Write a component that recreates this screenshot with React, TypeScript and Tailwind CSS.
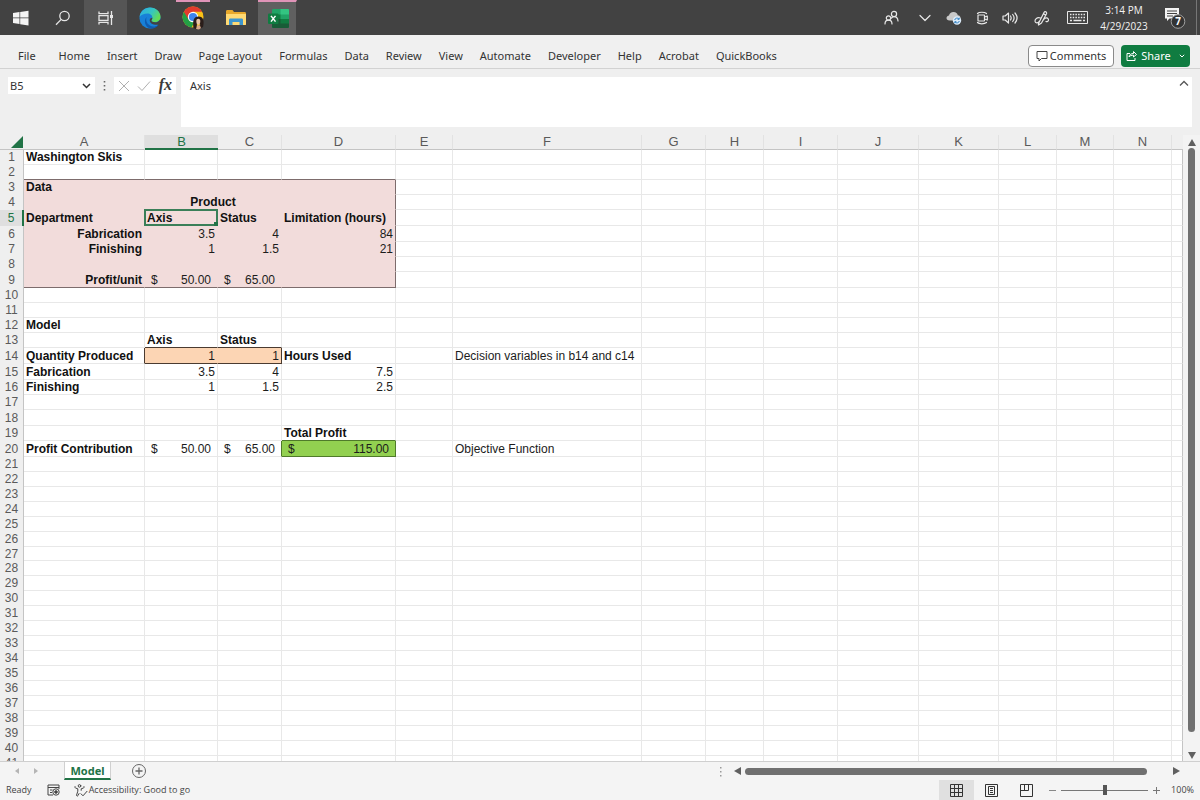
import React from "react";

type Kind = "text" | "right" | "money" | "center";
type Cell = { v: string; kind?: Kind; bold?: boolean; span?: number };

const columns = [
  { id: "A", w: "w-[121px]" },
  { id: "B", w: "w-[73px]" },
  { id: "C", w: "w-[64px]" },
  { id: "D", w: "w-[114px]" },
  { id: "E", w: "w-[57px]" },
  { id: "F", w: "w-[189px]" },
  { id: "G", w: "w-[64px]" },
  { id: "H", w: "w-[58px]" },
  { id: "I", w: "w-[74px]" },
  { id: "J", w: "w-[81px]" },
  { id: "K", w: "w-[80px]" },
  { id: "L", w: "w-[58px]" },
  { id: "M", w: "w-[57px]" },
  { id: "N", w: "w-[58px]" },
];

const cells: Record<string, Cell> = {
  A1: { v: "Washington Skis", bold: true },
  A3: { v: "Data", bold: true },
  B4: { v: "Product", bold: true, kind: "center", span: 2 },
  A5: { v: "Department", bold: true },
  B5: { v: "Axis", bold: true },
  C5: { v: "Status", bold: true },
  D5: { v: "Limitation (hours)", bold: true },
  A6: { v: "Fabrication", bold: true, kind: "right" },
  B6: { v: "3.5", kind: "right" },
  C6: { v: "4", kind: "right" },
  D6: { v: "84", kind: "right" },
  A7: { v: "Finishing", bold: true, kind: "right" },
  B7: { v: "1", kind: "right" },
  C7: { v: "1.5", kind: "right" },
  D7: { v: "21", kind: "right" },
  A9: { v: "Profit/unit", bold: true, kind: "right" },
  B9: { v: "50.00", kind: "money" },
  C9: { v: "65.00", kind: "money" },
  A12: { v: "Model", bold: true },
  B13: { v: "Axis", bold: true },
  C13: { v: "Status", bold: true },
  A14: { v: "Quantity Produced", bold: true },
  B14: { v: "1", kind: "right" },
  C14: { v: "1", kind: "right" },
  D14: { v: "Hours Used", bold: true },
  F14: { v: "Decision variables in b14 and c14" },
  A15: { v: "Fabrication", bold: true },
  B15: { v: "3.5", kind: "right" },
  C15: { v: "4", kind: "right" },
  D15: { v: "7.5", kind: "right" },
  A16: { v: "Finishing", bold: true },
  B16: { v: "1", kind: "right" },
  C16: { v: "1.5", kind: "right" },
  D16: { v: "2.5", kind: "right" },
  D19: { v: "Total Profit", bold: true },
  A20: { v: "Profit Contribution", bold: true },
  B20: { v: "50.00", kind: "money" },
  C20: { v: "65.00", kind: "money" },
  D20: { v: "115.00", kind: "money" },
  F20: { v: "Objective Function" },
};

const tallRows = [5, 6, 9, 14, 15, 18, 20];

function rowHeight(row: number) {
  if (tallRows.includes(row)) return "h-[16px]";
  return row === 27 ? "h-[14px]" : "h-[15px]";
}

function cellStyle(col: string, row: number) {
  const inAD = "ABCD".includes(col);
  if (inAD && row >= 3 && row <= 9) {
    const right = col === "D" ? "border-r-[#7d6c6c]" : "border-r-[#f2dcdb]";
    const bottom = row === 9 ? "border-b-[#7d6c6c]" : "border-b-[#f2dcdb]";
    return `bg-[#f2dcdb] ${right} ${bottom}`;
  }
  if (inAD && row === 2) return "border-r-[#e8e8e8] border-b-[#7d6c6c]";
  if (row === 14 && (col === "B" || col === "C"))
    return `bg-[#fcd5b4] border-b-[#4a3b30] ${col === "C" ? "border-r-[#4a3b30]" : "border-r-[#fcd5b4]"}`;
  if (row === 13 && (col === "B" || col === "C")) return "border-r-[#e8e8e8] border-b-[#4a3b30]";
  if (row === 14 && col === "A") return "border-r-[#4a3b30] border-b-[#e8e8e8]";
  if (row === 20 && col === "D") return "bg-[#92d050] border-[#4f7a2a]";
  if (row === 19 && col === "D") return "border-r-[#e8e8e8] border-b-[#4f7a2a]";
  if (row === 20 && col === "C") return "border-r-[#4f7a2a] border-b-[#e8e8e8]";
  return "border-r-[#e8e8e8] border-b-[#e8e8e8]";
}

function CellText({ cell }: { cell?: Cell }) {
  if (!cell) return null;
  if (cell.kind === "money")
    return (
      <div className="flex justify-between px-[6px]">
        <span>$</span>
        <span>{cell.v}</span>
      </div>
    );
  return <>{cell.v}</>;
}

function Grid() {
  const rows = Array.from({ length: 41 }, (_, i) => i + 1);
  return (
    <table className="w-full table-fixed border-separate border-spacing-0 bg-white text-[12px] leading-[14px] text-[#1c1c1c]">
      <colgroup>
        <col className="w-[24px]" />
        {columns.map((c) => (
          <col key={c.id} className={c.w} />
        ))}
        <col />
      </colgroup>
      <thead>
        <tr className="h-[15px] bg-[#efefef] text-[13px] text-[#5a5a5a]">
          <th className="border-b border-[#c4c4c4] p-0" aria-label="Select all">
            <svg className="ml-auto mr-[1px] h-[12px] w-[12px]" viewBox="0 0 12 12">
              <path d="M12 0v12H0z" fill="#217346" />
            </svg>
          </th>
          {columns.map((c) => (
            <th
              key={c.id}
              scope="col"
              className={
                c.id === "B"
                  ? "border-b-2 border-[#217346] bg-[#dfdfdf] p-0 font-normal leading-[13px] text-[#217346]"
                  : "border-b border-r border-b-[#c4c4c4] border-r-[#e2e2e2] p-0 font-normal"
              }
            >
              {c.id}
            </th>
          ))}
          <th className="border-b border-[#c4c4c4] p-0" />
        </tr>
      </thead>
      <tbody>
        {rows.map((r) => (
          <tr key={r} className={rowHeight(r)}>
            <th
              scope="row"
              className={`border-r p-0 text-center text-[12px] font-normal leading-[13px] ${
                r === 5
                  ? "border-r-2 border-[#217346] bg-[#dfdfdf] text-[#217346]"
                  : "border-[#c4c4c4] bg-[#efefef] text-[#5a5a5a]"
              }`}
            >
              {r}
            </th>
            {columns.map((c) => {
              if (c.id === "C" && r === 4) return null;
              const cell = cells[c.id + r];
              const align =
                cell?.kind === "right" ? "pr-[2px] text-right" : cell?.kind === "center" ? "text-center" : cell?.kind === "money" ? "" : "pl-[2px]";
              return (
                <td
                  key={c.id}
                  colSpan={cell?.span}
                  className={`whitespace-nowrap border-b border-r p-0 align-bottom leading-[13px] ${align} ${cell?.bold ? "font-bold text-[#111]" : ""} ${cellStyle(c.id, r)} ${
                    c.id + r === "B5" ? "relative" : ""
                  }`}
                >
                  <CellText cell={cell} />
                  {c.id + r === "B5" && (
                    <span className="pointer-events-none absolute -inset-px border-2 border-[#3a7f58]">
                      <span className="absolute -bottom-[2px] -right-[2px] h-[4px] w-[4px] bg-[#217346]" />
                    </span>
                  )}
                </td>
              );
            })}
            <td className="border-b border-r border-b-[#e8e8e8] border-r-[#c4c4c4] p-0" />
          </tr>
        ))}
      </tbody>
    </table>
  );
}

function TaskButton({ label, className = "w-[42px]", children }: { label: string; className?: string; children: React.ReactNode }) {
  return (
    <button aria-label={label} className={`flex h-full items-center justify-center ${className}`}>
      {children}
    </button>
  );
}

function TrayButton({ label, className = "w-[28px]", children }: { label: string; className?: string; children: React.ReactNode }) {
  return (
    <button aria-label={label} className={`flex h-full items-center justify-center text-[#e8e8e8] ${className}`}>
      {children}
    </button>
  );
}

const line = { fill: "none", stroke: "currentColor", strokeWidth: 1.2, strokeLinecap: "round", strokeLinejoin: "round" } as const;

function Taskbar() {
  return (
    <header className="flex h-[35px] shrink-0 items-center justify-between bg-[#424242]">
      <div className="flex h-full items-center">
        <TaskButton label="Start">
          <svg width="16" height="16" viewBox="0 0 16 16" fill="#f4f4f4">
            <path d="M0 3l6.500-1v5.600H0zM7.200 1.900L15.500.7v6.900H7.200zM0 8.300h6.500v5.700L0 13.100zM7.200 8.300h8.300v7.100l-8.300-1.200z" />
          </svg>
        </TaskButton>
        <TaskButton label="Search">
          <svg width="16" height="16" viewBox="0 0 16 16" fill="none" stroke="#e6e6e6" strokeWidth="1.300">
            <circle cx="9.500" cy="6" r="4.700" />
            <path d="M6.200 9.400L1 14.800" />
          </svg>
        </TaskButton>
        <TaskButton label="Task View" className="w-[43px] bg-[#555]">
          <svg width="16" height="16" viewBox="0 0 16 16" fill="none" stroke="#e6e6e6" strokeWidth="1.300">
            <path d="M1 1.500v2.200h9V1.500M1 14.500v-2.200h9v2.200M1 5.700h9v4.600H1zM13.500 1v14" />
            <path d="M12 5h3v3h-3z" fill="#e6e6e6" stroke="none" />
          </svg>
        </TaskButton>
        <TaskButton label="Microsoft Edge" className="mr-[3px] w-[46px]">
          <svg width="22" height="22" viewBox="0 0 24 24">
            <defs>
              <linearGradient id="edgeTop" x1="0" y1="0" x2="1" y2="0.500">
                <stop offset="0" stopColor="#2aa8e8" />
                <stop offset="0.600" stopColor="#36c6c0" />
                <stop offset="1" stopColor="#63dc55" />
              </linearGradient>
            </defs>
            <circle cx="12" cy="12" r="11.500" fill="#1880d8" />
            <path d="M.6 11C1.200 4.800 6 .5 12 .5c7 0 11.500 5 11.500 10.200 0 3.800-2.900 5.900-6 5.900-2.300 0-3.900-.9-3.900-1.900 0-.7 1-1.200 1-3 0-2.500-2.300-4.600-5.400-4.600C5.500 7.100 2 8.500.6 11z" fill="url(#edgeTop)" />
            <path d="M8.300 11c-1.700 5 2 10.300 7.500 10.200 2.200 0 4.300-.8 5.900-2.200-2.700 3.600-6.500 4.800-9.700 4.500C7 22 4.500 15.500 8.300 11z" fill="#0f5bb0" />
            <path d="M14.600 11.700c0 1.800-1 2.300-1 3 0 1 1.600 1.900 3.900 1.900 2.100 0 4.200-1 5.300-2.800l.7 1.200c-.4 1.600-1 2.900-1.800 4-4.200 1.200-9.500-.2-10-4.300-.2-1.600.9-3 2.900-3z" fill="#424242" />
          </svg>
        </TaskButton>
        <TaskButton label="Google Chrome" className="w-[34px] border-t-2 border-[#e094b8] pb-[1px]">
          <svg width="23" height="24" viewBox="0 0 23 24">
            <circle cx="11" cy="11" r="10.500" fill="#fbc116" />
            <path d="M1.900 5.750A10.500 10.500 0 0 0 9.500 21.400L14 13z" fill="#23a045" />
            <path d="M11 5.800h9.100A10.500 10.500 0 0 0 1.900 5.750L6.500 13.600z" fill="#e33b2e" />
            <circle cx="11" cy="11" r="5.200" fill="#fff" />
            <circle cx="11" cy="11" r="4.100" fill="#3d83ee" />
            <path d="M11.500 22c-1-7 0-11.500 5-11.500s6 5 4.500 10.500l-3 1.500.3-4-1.800-1-1.700 1 .2 5z" fill="#2a1d1a" />
            <path d="M14.300 15c0-3 4-3 4 0s-1 3.700-2 3.700-2-.7-2-3.700z" fill="#e9c4a8" />
            <path d="M14 23l1-3.500 2.800-.3 1.200 2.800-2 1.500z" fill="#d8a98a" />
          </svg>
        </TaskButton>
        <TaskButton label="File Explorer" className="w-[48px] pl-[3px]">
          <svg width="20" height="18" viewBox="0 0 20 18">
            <path d="M0 2.500C0 1.500.5 1 1.500 1h5l1.500 2h10.500c1 0 1.500.5 1.500 1.500V15c0 .7-.3 1-1 1H1c-.7 0-1-.3-1-1z" fill="#e8a92c" />
            <path d="M0 5h20v10c0 .7-.3 1-1 1H1c-.7 0-1-.3-1-1z" fill="#ffda74" />
            <path d="M3 16v-5c0-1 .5-1.500 1.500-1.500h11c1 0 1.500.5 1.500 1.500v5h-3.500v-3h-7v3z" fill="#3d96cf" />
          </svg>
        </TaskButton>
        <TaskButton label="Excel" className="w-[39px] border-r border-t-2 border-r-[#424242] border-t-[#e094b8] bg-[#606060] pl-[2px]">
          <svg width="21" height="19" viewBox="0 0 21 19">
            <rect x="4" width="17" height="19" rx="1.200" fill="#21a366" />
            <path d="M12.500 0H20a1 1 0 0 1 1 1v4.500h-8.500z" fill="#33c481" />
            <path d="M4 5.500h8.500V10H4z" fill="#107c41" />
            <path d="M4 10h17v8a1 1 0 0 1-1 1H5a1 1 0 0 1-1-1z" fill="#185c37" />
            <path d="M12.500 10H21v4.500h-8.500z" fill="#107c41" />
            <rect y="4.500" width="10.500" height="10.500" rx="1" fill="#107c41" />
            <path d="M3 6.900l4.500 5.700M7.500 6.900L3 12.600" stroke="#fff" strokeWidth="1.500" />
          </svg>
        </TaskButton>
      </div>
      <div className="flex h-full items-center">
        <TrayButton label="People" className="w-[36px]">
          <svg width="15" height="15" viewBox="0 0 15 15" {...line}>
            <circle cx="10" cy="4" r="2.600" />
            <circle cx="4.500" cy="8" r="2.200" />
            <path d="M1 14c0-2.500 1.500-3.800 3.500-3.800S8 11.500 8 14M7.500 8C8.200 7.200 9 6.700 10 6.700c2.300 0 3.800 1.600 4 4.300" />
          </svg>
        </TrayButton>
        <TrayButton label="Show hidden icons" className="w-[31px]">
          <svg width="12" height="8" viewBox="0 0 12 8" {...line}>
            <path d="M1 1.500l5 5 5-5" />
          </svg>
        </TrayButton>
        <TrayButton label="OneDrive">
          <svg width="16" height="14" viewBox="0 0 16 14">
            <path d="M3.500 9.500C1.500 9.500.5 8.500.5 7S2 4.500 3 4.500C3.500 2.500 5 1 7.500 1s4 1.500 4.300 3.200C13.500 4.300 14.500 5.500 14.500 7S13.500 9.500 12 9.500z" fill="#c9c9c9" />
            <circle cx="11" cy="9.500" r="4.200" fill="#dcebf8" />
            <path d="M8.700 9a2.400 2.400 0 0 1 4.200-1M13.300 10a2.400 2.400 0 0 1-4.200 1M13.200 6.700v1.600h-1.600M8.800 12.300v-1.600h1.600" fill="none" stroke="#2277bd" strokeWidth="0.900" />
          </svg>
        </TrayButton>
        <TrayButton label="Meet Now">
          <svg width="13" height="14" viewBox="0 0 13 14" {...line}>
            <rect x="2" y="4" width="6.500" height="6" rx="0.500" />
            <path d="M8.500 6l2.800-1v4l-2.800-1M1.500 2.500C3 .8 8.500.8 10.500 2.500M1.500 11.500c1.500 1.700 7 1.700 9 0" />
          </svg>
        </TrayButton>
        <TrayButton label="Volume">
          <svg width="16" height="14" viewBox="0 0 16 14" {...line}>
            <path d="M1 5v4h2.200L6.500 12V2L3.200 5zM8.500 5c.8 1.200.8 2.800 0 4M10.700 3.500c1.600 2 1.600 5 0 7M13 2c2.500 3 2.500 7 0 10" />
          </svg>
        </TrayButton>
        <TrayButton label="Pen" className="w-[36px]">
          <svg width="16" height="16" viewBox="0 0 16 16" {...line}>
            <path d="M4.500 13.500L10 2.500c.9-1.600 3.300-.4 2.500 1.200L7.500 13 4.500 15zM9.400 3.800l2.500 1.300M6.500 8C3 7 .8 9 1 11.200c.2 2 3 2.300 4.300 0M9.300 10c1.500-3 5.500-2.500 5.200.2-.2 1.300-1.500 1.800-2.500 1.300" />
          </svg>
        </TrayButton>
        <TrayButton label="Touch keyboard" className="w-[34px]">
          <svg width="21" height="13" viewBox="0 0 21 13" fill="none" stroke="currentColor">
            <path d="M.5.5h20v12H.5z" />
            <path d="M3 3.500h15M3 6.500h15" strokeDasharray="1.500 1.200" strokeWidth="1.300" />
            <path d="M3 9.500h2M6.500 9.500h8M16 9.500h2" strokeWidth="1.300" />
          </svg>
        </TrayButton>
        <time className="w-[60px] text-center font-['Open_Sans',sans-serif] text-[10px] leading-[16px] text-[#f2f2f2]">
          <span className="block">3:14 PM</span>
          <span className="block">4/29/2023</span>
        </time>
        <TrayButton label="Notifications" className="w-[43px] border-r border-[#777] pr-[1px]">
          <svg width="22" height="24" viewBox="0 0 22 24">
            <path d="M1 2h14v10.500H5.500L3 15v-2.500H1z" fill="#f4f4f4" />
            <path d="M3 5h10M3 7.500h10M3 10h6" stroke="#424242" />
            <circle cx="14" cy="15.500" r="6.800" fill="#333" stroke="#a0a0a0" />
            <text x="14" y="19" textAnchor="middle" fontFamily="Open Sans, sans-serif" fontSize="10" fontWeight="700" fill="#fff">
              7
            </text>
          </svg>
        </TrayButton>
        <span className="w-[3px]" />
      </div>
    </header>
  );
}

const tabs = ["Home", "Insert", "Draw", "Page Layout", "Formulas", "Data", "Review", "View", "Automate", "Developer", "Help", "Acrobat", "QuickBooks"];

function Ribbon() {
  return (
    <div className="flex h-[34px] shrink-0 items-center justify-between border-b border-[#d2d2d2] bg-[#f0f0f0] pl-[18px] pr-[10px] pt-[8px] font-['Noto_Sans',sans-serif] text-[11px] leading-[16px] text-[#333]">
      <nav className="flex items-center gap-[17px]">
        <button className="mr-[6px]">File</button>
        {tabs.map((t) => (
          <button key={t} className="whitespace-nowrap">
            {t}
          </button>
        ))}
      </nav>
      <div className="flex gap-[7px]">
        <button className="flex h-[22px] w-[86px] items-center justify-center gap-[2px] rounded-[4px] border border-[#8a8a8a] bg-white">
          <svg width="12" height="12" viewBox="0 0 12 12" fill="none" stroke="#444">
            <path d="M1 1.500h10v7H5.500L3 11V8.500H1z" />
          </svg>
          Comments
        </button>
        <button className="flex h-[22px] w-[69px] items-center justify-center gap-[4px] rounded-[4px] bg-[#107c41] text-white">
          <svg width="11" height="11" viewBox="0 0 11 11" fill="none" stroke="#fff">
            <path d="M4 3.500H1v7h8V8M3 7c.3-2.500 2-3.500 4.500-3.500V1.500L10.500 4.500 7.500 7V5.200C5.500 5.200 4 5.500 3 7z" />
          </svg>
          Share
          <svg className="ml-[4px]" width="6" height="4" viewBox="0 0 6 4" fill="none" stroke="#fff">
            <path d="M.8.800L3 3 5.200.8" />
          </svg>
        </button>
      </div>
    </div>
  );
}

function FormulaBar() {
  return (
    <div className="flex h-[66px] shrink-0 items-start bg-[#efefef] px-[8px] pt-[8px] font-['Noto_Sans',sans-serif] text-[11px] text-[#333]">
      <div className="flex h-[17px] w-[87px] items-center bg-white pl-[2px] pr-[4px]">
        <input aria-label="Name box" defaultValue="B5" className="w-full min-w-0 bg-transparent leading-[16px] outline-none" />
        <svg className="shrink-0" width="9" height="6" viewBox="0 0 9 6" fill="none" stroke="#333" strokeWidth="1.500">
          <path d="M1 1l3.500 3.500L8 1" />
        </svg>
      </div>
      <svg className="mx-[8px] mt-[3px]" width="3" height="12" viewBox="0 0 3 12" fill="#666">
        <path d="M.7 1h1.600v1.600H.7zM.7 5h1.600v1.600H.7zM.7 9h1.600v1.600H.7z" />
      </svg>
      <div className="flex h-[17px] w-[62px] items-center justify-between bg-white px-[4px]">
        <button aria-label="Cancel">
          <svg width="12" height="12" viewBox="0 0 12 12" stroke="#b0b0b0">
            <path d="M1 1l10 10M11 1L1 11" />
          </svg>
        </button>
        <button aria-label="Enter">
          <svg width="14" height="12" viewBox="0 0 14 12" fill="none" stroke="#b0b0b0">
            <path d="M1 6.500L5 10.500 13 1.500" />
          </svg>
        </button>
        <button aria-label="Insert function" className="pb-[2px] font-['Liberation_Serif',serif] text-[16px] font-bold italic leading-[16px] text-[#3a3a3a]">
          fx
        </button>
      </div>
      <div className="ml-[5px] flex h-[50px] flex-1 items-start bg-white">
        <textarea aria-label="Formula" defaultValue="Axis" className="h-full flex-1 resize-none bg-transparent pl-[9px] leading-[17px] outline-none" />
        <button aria-label="Collapse formula bar" className="p-[3px]">
          <svg width="10" height="7" viewBox="0 0 10 7" fill="none" stroke="#555" strokeWidth="1.300">
            <path d="M1 5.500l4-4 4 4" />
          </svg>
        </button>
      </div>
    </div>
  );
}

function SheetTabs() {
  return (
    <div className="flex h-[18px] w-[60%] items-center">
      <button aria-label="Previous sheet" className="ml-[15px]">
        <svg width="4" height="6" viewBox="0 0 4 6" fill="#b5b5b5">
          <path d="M4 0v6L0 3z" />
        </svg>
      </button>
      <button aria-label="Next sheet" className="ml-[15px]">
        <svg width="4" height="6" viewBox="0 0 4 6" fill="#b5b5b5">
          <path d="M0 0v6l4-3z" />
        </svg>
      </button>
      <button className="ml-[26px] h-[18px] w-[47px] border-x border-b-2 border-x-[#d0d0d0] border-b-[#217346] bg-white font-['Noto_Sans',sans-serif] text-[11px] font-bold leading-[15px] text-[#217346]">
        Model
      </button>
      <button aria-label="New sheet" className="ml-[20px]">
        <svg width="16" height="16" viewBox="0 0 16 16" fill="none" stroke="#666">
          <circle cx="8" cy="8" r="6.500" />
          <path d="M4.500 8h7M8 4.500v7" strokeWidth="1.300" />
        </svg>
      </button>
    </div>
  );
}

function HorizontalScroll() {
  return (
    <div className="flex flex-1 items-center pr-[20px]">
      <svg width="2" height="11" viewBox="0 0 2 11" fill="#999">
        <path d="M0 1h1.500v1.500H0zM0 5h1.500v1.500H0zM0 9h1.500v1.500H0z" />
      </svg>
      <button aria-label="Scroll left" className="ml-[12px]">
        <svg width="7" height="8" viewBox="0 0 7 8" fill="#606060">
          <path d="M7 0v8L0 4z" />
        </svg>
      </button>
      <div className="ml-[4px] mr-[26px] h-[7px] flex-1 rounded-full bg-[#707070]" />
      <button aria-label="Scroll right">
        <svg width="7" height="8" viewBox="0 0 7 8" fill="#606060">
          <path d="M0 0v8l7-4z" />
        </svg>
      </button>
    </div>
  );
}

function SheetBar() {
  return (
    <div className="flex h-[19px] shrink-0 border-t border-[#cfcfcf] bg-[#f4f4f4]">
      <SheetTabs />
      <HorizontalScroll />
    </div>
  );
}

function StatusBar() {
  return (
    <footer className="flex h-[20px] shrink-0 items-center justify-between bg-[#f4f4f4] px-[6px] font-['Open_Sans',sans-serif] text-[9px] leading-[14px] text-[#444]">
      <div className="flex items-center">
        <span>Ready</span>
        <button aria-label="Record macro" className="ml-[15px]">
          <svg width="13" height="12" viewBox="0 0 13 12" fill="none" stroke="#444">
            <path d="M6 11H1V1h11v4M1 3.500h11M3 6h2.500M3 8.500h2" />
            <circle cx="9" cy="8" r="3.200" />
            <circle cx="9" cy="8" r="1.300" fill="#444" />
          </svg>
        </button>
        <button className="ml-[14px] flex items-center gap-[1px]">
          <svg width="14" height="13" viewBox="0 0 14 13" fill="none" stroke="#444" strokeLinecap="round" strokeLinejoin="round">
            <circle cx="5.500" cy="1.900" r="1.300" />
            <path d="M1 2.500c-.5.800 0 1.300.8 1.600l2 .7v2.400L2.600 11c-.3 1 .9 1.500 1.400.6l1-2M10 2.500c.5.800 0 1.300-.8 1.600l-2 .7v1.500M7 9.800l2 2 4-4.500" />
          </svg>
          Accessibility: Good to go
        </button>
      </div>
      <div className="flex h-full items-center">
        <button aria-label="Normal view" className="flex h-full w-[35px] items-center justify-center bg-[#e0e0e0]">
          <svg width="13" height="13" viewBox="0 0 13 13" fill="none" stroke="#333">
            <path d="M.5.5h12v12H.5zM.5 4.500h12M.5 8.500h12M4.500.5v12M8.500.5v12" />
          </svg>
        </button>
        <button aria-label="Page layout view" className="flex h-full w-[35px] items-center justify-center">
          <svg width="13" height="13" viewBox="0 0 13 13" fill="none" stroke="#333">
            <path d="M.5.5h12v12H.5zM3.500 2.500h6v8h-6zM5 4.500h3M5 6.500h3M5 8.500h3" />
          </svg>
        </button>
        <button aria-label="Page break preview" className="flex h-full w-[35px] items-center justify-center">
          <svg width="13" height="13" viewBox="0 0 13 13" fill="none" stroke="#333">
            <path d="M.5.5h12v12H.5zM4.500.5v6M8.500.5v6M.5 6.500h8" />
          </svg>
        </button>
        <button aria-label="Zoom out" className="ml-[5px]">
          <svg width="7" height="7" viewBox="0 0 7 7" stroke="#888">
            <path d="M0 3.500h7" />
          </svg>
        </button>
        <input
          type="range"
          aria-label="Zoom"
          defaultValue={50}
          className="mx-[5px] h-px w-[87px] appearance-none bg-[#777] [&::-webkit-slider-thumb]:h-[10px] [&::-webkit-slider-thumb]:w-[4px] [&::-webkit-slider-thumb]:appearance-none [&::-webkit-slider-thumb]:bg-[#555]"
        />
        <button aria-label="Zoom in">
          <svg width="7" height="7" viewBox="0 0 7 7" stroke="#777">
            <path d="M0 3.500h7M3.500 0v7" />
          </svg>
        </button>
        <span className="ml-[11px]">100%</span>
      </div>
    </footer>
  );
}

export default function App() {
  return (
    <div className="flex h-screen flex-col overflow-hidden bg-[#efefef] font-['Liberation_Sans',Arial,sans-serif]">
      <Taskbar />
      <Ribbon />
      <FormulaBar />
      <main className="flex min-h-0 flex-1">
        <div className="min-w-0 flex-1 overflow-hidden">
          <Grid />
        </div>
        <div className="flex w-[17px] shrink-0 flex-col items-center bg-[#f3f3f3] pb-[2px] pt-[4px]">
          <button aria-label="Scroll up">
            <svg width="8" height="7" viewBox="0 0 8 7" fill="#606060">
              <path d="M0 7h8L4 0z" />
            </svg>
          </button>
          <div className="mb-[20px] mt-[2px] w-[7px] flex-1 rounded-full bg-[#707070]" />
          <button aria-label="Scroll down">
            <svg width="8" height="7" viewBox="0 0 8 7" fill="#606060">
              <path d="M0 0h8L4 7z" />
            </svg>
          </button>
        </div>
      </main>
      <SheetBar />
      <StatusBar />
    </div>
  );
}
